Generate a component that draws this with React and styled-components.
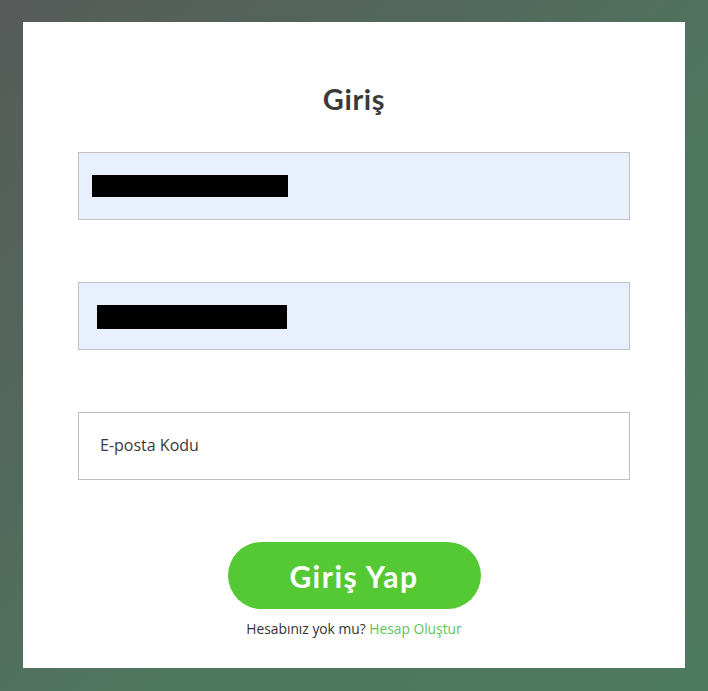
import React from "react";
import styled, { createGlobalStyle } from "styled-components";

const Global = createGlobalStyle`
  html, body { margin: 0; padding: 0; height: 100%; }
  body {
    background: linear-gradient(135deg, #575b59 0%, #52695d 35%, #4f765f 60%, #4e7a5f 100%);
    font-family: "Open Sans", "Liberation Sans", sans-serif;
  }
  #root { min-height: 100%; }
`;

const Page = styled.div`
  width: 708px;
  height: 691px;
  box-sizing: border-box;
  padding: 22px 23px 23px 23px;
  display: flex;
`;

const Card = styled.div`
  flex: 1;
  background: #fff;
  box-sizing: border-box;
  padding: 60px 55px 0 55px;
  display: flex;
  flex-direction: column;
  align-items: stretch;
`;

const Title = styled.h1`
  margin: 0 0 36px 0;
  text-align: center;
  font-family: "Lato", "Noto Sans", sans-serif;
  font-weight: 700;
  font-size: 29px;
  letter-spacing: 0.6px;
  line-height: 34px;
  color: #3a3a3a;
`;

const Field = styled.div`
  height: 68px;
  box-sizing: border-box;
  border: 1px solid #c0c0c0;
  background: ${(p) => (p.$filled ? "#e8f0fe" : "#ffffff")};
  margin-bottom: 62px;
  display: flex;
  align-items: center;
  padding-left: ${(p) => p.$pad}px;
`;

const Redact = styled.div`
  width: ${(p) => p.$w}px;
  height: ${(p) => p.$h}px;
  background: #000;
  margin-top: ${(p) => p.$mt}px;
`;

const Placeholder = styled.span`
  font-family: "Open Sans", "Liberation Sans", sans-serif;
  font-size: 16px;
  color: #3a3a3a;
  margin-top: -3px;
`;

const ButtonRow = styled.div`
  display: flex;
  justify-content: center;
`;

const Button = styled.button`
  width: 253px;
  height: 67px;
  border: none;
  border-radius: 34px;
  background: #55c934;
  color: #fff;
  font-family: "Lato", "Noto Sans", sans-serif;
  font-weight: 700;
  font-size: 30px;
  letter-spacing: 1.5px;
  padding: 0;
  cursor: pointer;
`;

const Footer = styled.p`
  margin: 10px 0 0 0;
  text-align: center;
  font-family: "Open Sans", "Liberation Sans", sans-serif;
  font-size: 13.8px;
  color: #333;
`;

const Link = styled.a`
  color: #5cc45a;
  text-decoration: none;
`;

export default function App() {
  return (
    <>
      <Global />
      <Page>
        <Card>
          <Title>Giriş</Title>
          <Field $filled $pad={13}>
            <Redact $w={196} $h={22} $mt={0} />
          </Field>
          <Field $filled $pad={18}>
            <Redact $w={190} $h={24} $mt={2} />
          </Field>
          <Field $pad={21}>
            <Placeholder>E-posta Kodu</Placeholder>
          </Field>
          <ButtonRow>
            <Button>Giriş Yap</Button>
          </ButtonRow>
          <Footer>
            Hesabınız yok mu? <Link href="#">Hesap Oluştur</Link>
          </Footer>
        </Card>
      </Page>
    </>
  );
}
